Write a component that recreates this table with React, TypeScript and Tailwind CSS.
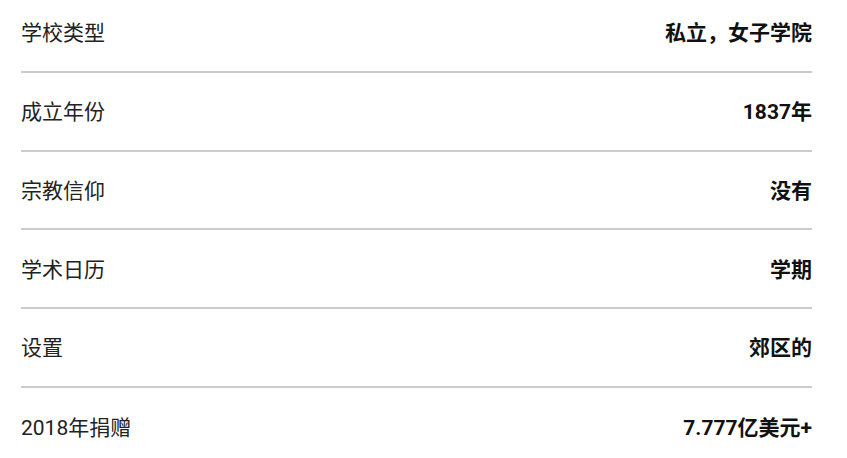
import React from 'react';

type Fact = { label: string; value: string };

const facts: Fact[] = [
  { label: '学校类型', value: '私立，女子学院' },
  { label: '成立年份', value: '1837年' },
  { label: '宗教信仰', value: '没有' },
  { label: '学术日历', value: '学期' },
  { label: '设置', value: '郊区的' },
  { label: '2018年捐赠', value: '7.777亿美元+' },
];

const App: React.FC = () => {
  return (
    <div
      className="w-[847px] h-[458px] overflow-hidden bg-white"
      style={{ fontFamily: '"Roboto", "Noto Sans CJK SC", sans-serif' }}
    >
      <div className="-mt-[6px] pl-[21px] pr-[35px]">
        {facts.map((f, i) => (
          <div
            key={f.label}
            className={`flex h-[78.8px] items-center justify-between pt-[3px] ${i < facts.length - 1 ? 'border-b-2 border-[#cccccc]' : ''}`}
          >
            <span className="text-[21px] text-[#222222]">{f.label}</span>
            <span className="text-[21px] font-bold text-[#111111]">{f.value}</span>
          </div>
        ))}
      </div>
    </div>
  );
};

export default App;
